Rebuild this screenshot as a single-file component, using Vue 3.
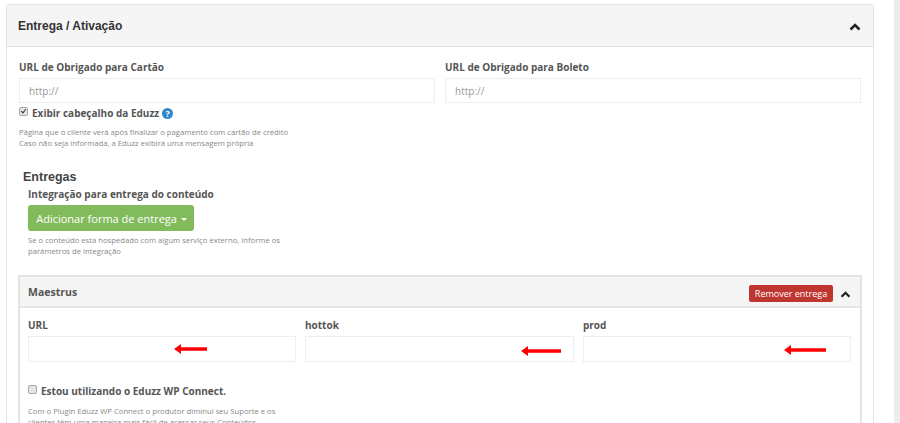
<script setup>
const arrowPath = (w) => `M0 5 7 0v3.200h${w - 7}v3.600H7V10z`;

const deliveryFields = [
  { name: 'URL', arrowRight: 89, arrowTop: 8, arrowWidth: 33 },
  { name: 'hottok', arrowRight: 13, arrowTop: 10, arrowWidth: 40 },
  { name: 'prod', arrowRight: 25, arrowTop: 9, arrowWidth: 42 }
];
</script>

<template>
  <div class="page">
    <div class="panel">
      <div class="panel-heading">
        <h3 class="panel-title">Entrega / Ativação</h3>
        <svg class="chevron" viewBox="0 0 12 8"><path d="M1.500 6.500 6 2l4.500 4.500" /></svg>
      </div>
      <div class="panel-body">
        <div class="url-row">
          <div class="field">
            <label class="label">URL de Obrigado para Cartão</label>
            <input class="input" placeholder="http://" />
          </div>
          <div class="field">
            <label class="label">URL de Obrigado para Boleto</label>
            <input class="input" placeholder="http://" />
          </div>
        </div>
        <div class="check-row">
          <input type="checkbox" class="check" checked />
          <span class="label">Exibir cabeçalho da Eduzz</span>
          <span class="help-icon">?</span>
        </div>
        <p class="help first-help">Página que o cliente verá após finalizar o pagamento com cartão de crédito<br />Caso não seja informada, a Eduzz exibirá uma mensagem própria</p>

        <h4 class="section-title">Entregas</h4>
        <div class="section">
          <label class="label">Integração para entrega do conteúdo</label>
          <button class="add-btn">Adicionar forma de entrega <span class="caret"></span></button>
          <p class="help">Se o conteúdo esta hospedado com algum serviço externo, informe os<br />parâmetros de integração</p>
        </div>

        <div class="inner-panel">
          <div class="inner-heading">
            <span class="inner-title">Maestrus</span>
            <button class="remove-btn">Remover entrega</button>
            <svg class="chevron small" viewBox="0 0 12 8"><path d="M1.500 6.500 6 2l4.500 4.500" /></svg>
          </div>
          <div class="inner-body">
            <div class="delivery-row">
              <div v-for="f in deliveryFields" :key="f.name" class="field">
                <label class="label">{{ f.name }}</label>
                <div class="input-wrap">
                  <input class="input tall" />
                  <svg
                    class="arrow"
                    :style="{ right: f.arrowRight + 'px', top: f.arrowTop + 'px', width: f.arrowWidth + 'px' }"
                    :viewBox="`0 0 ${f.arrowWidth} 10`"
                  >
                    <path :d="arrowPath(f.arrowWidth)" />
                  </svg>
                </div>
              </div>
            </div>
            <div class="check-row wp-row">
              <input type="checkbox" class="check" />
              <span class="label">Estou utilizando o Eduzz WP Connect.</span>
            </div>
            <p class="help">Com o Plugin Eduzz WP Connect o produtor diminui seu Suporte e os<br />clientes têm uma maneira mais fácil de acessar seus Conteúdos</p>
          </div>
        </div>
      </div>
    </div>
    <div class="scrollbar"></div>
  </div>
</template>

<style>
html, body {
  margin: 0;
  background: #fff;
  overflow: hidden;
}
</style>

<style scoped>
.page {
  display: flex;
  height: 423px;
  overflow: hidden;
  font-family: "Open Sans", sans-serif;
  color: #555;
}
.panel {
  width: 868px;
  flex: none;
  box-sizing: border-box;
  margin: 4px 0 0 6px;
  border: 1px solid #e4e4e4;
  border-radius: 3px 3px 0 0;
  align-self: flex-start;
}
.panel-heading {
  height: 41px;
  background: #f5f5f5;
  border-bottom: 1px solid #e2e2e2;
  display: flex;
  align-items: center;
  justify-content: space-between;
  padding: 0 12px 0 11px;
}
.panel-title {
  margin: 1px 0 0;
  font-family: "Liberation Sans", sans-serif;
  font-size: 12px;
  font-weight: 700;
  color: #333;
}
.chevron {
  width: 12px;
  height: 8px;
  flex: none;
  margin-top: 3px;
}
.chevron.small {
  width: 11px;
  height: 7px;
  margin-top: 5px;
}
.chevron path {
  fill: none;
  stroke: #222;
  stroke-width: 2.600;
}
.panel-body {
  padding: 13px 11px 0 12px;
}
.url-row {
  display: grid;
  grid-template-columns: 416px 416px;
  gap: 10px;
}
.label {
  display: block;
  font-size: 10px;
  font-weight: 700;
  line-height: 15px;
  color: #555;
}
.input {
  display: block;
  width: 100%;
  height: 25px;
  margin-top: 3px;
  box-sizing: border-box;
  border: 1px solid #eeeeee;
  background: #fff;
  padding: 0 9px;
  font-family: inherit;
  font-size: 10px;
  outline: none;
}
.input.tall {
  height: 26px;
}
.input::placeholder {
  color: #999;
  opacity: 1;
}
.check-row {
  display: flex;
  align-items: center;
  height: 14px;
  margin-top: 3px;
}
.check {
  appearance: none;
  position: relative;
  box-sizing: border-box;
  width: 9px;
  height: 9px;
  margin: -3px 4px 0 0;
  flex: none;
  border: 1px solid #a8a8a8;
  border-radius: 2px;
  background: #e6e6e6;
}
.check:checked::after {
  content: "";
  position: absolute;
  left: 1.500px;
  top: 0;
  width: 3px;
  height: 5px;
  border: solid #333;
  border-width: 0 1.500px 1.500px 0;
  transform: rotate(40deg);
  box-sizing: border-box;
}
.help-icon {
  width: 11px;
  height: 11px;
  margin-left: 3px;
  border-radius: 50%;
  background: #2f86c9;
  color: #fff;
  font-size: 9px;
  font-weight: 700;
  line-height: 11px;
  text-align: center;
}
.help {
  margin: 0;
  font-size: 7.700px;
  line-height: 11px;
  color: #888;
}
.first-help {
  margin-top: 7px;
}
.section-title {
  margin: 20px 0 0 4px;
  font-family: "Liberation Sans", sans-serif;
  font-size: 12.500px;
  font-weight: 700;
  line-height: 16px;
  color: #444;
}
.section {
  padding-left: 9px;
  margin-top: 2px;
}
.add-btn {
  display: block;
  margin-top: 3px;
  width: 166px;
  height: 26px;
  border: none;
  border-radius: 3px;
  background: #81bb5c;
  color: #fff;
  font-family: inherit;
  font-size: 11px;
  padding: 0 0 0 1px;
}
.caret {
  display: inline-block;
  vertical-align: middle;
  margin-left: 1px;
  border-top: 3px solid #fff;
  border-left: 3px solid transparent;
  border-right: 3px solid transparent;
}
.section .help {
  margin-top: 4px;
}
.inner-panel {
  margin-top: 18px;
  margin-left: -1px;
  width: 844px;
  box-sizing: border-box;
  border: 2px solid #e4e4e4;
  border-bottom: none;
}
.inner-heading {
  height: 29px;
  background: #f5f5f5;
  border-bottom: 2px solid #e4e4e4;
  display: flex;
  align-items: center;
  padding: 0 9px 0 8px;
}
.inner-title {
  font-size: 10.500px;
  font-weight: 700;
  color: #555;
  margin-right: auto;
}
.remove-btn {
  width: 84px;
  height: 17px;
  margin: 4px 7px 0 0;
  border: none;
  border-radius: 2px;
  background: #bf3631;
  color: #fff;
  font-family: inherit;
  font-size: 9px;
  padding: 0;
}
.inner-body {
  padding: 10px 8px 0;
}
.delivery-row {
  display: grid;
  grid-template-columns: 268px 269px 268px;
  gap: 9px;
}
.input-wrap {
  position: relative;
}
.arrow {
  position: absolute;
  height: 10px;
  fill: #f00;
}
.wp-row {
  margin-top: 22px;
}
.wp-row + .help {
  margin-top: 8px;
}
.scrollbar {
  flex: none;
  width: 6px;
  margin-left: auto;
  background: #ededed;
}
</style>
